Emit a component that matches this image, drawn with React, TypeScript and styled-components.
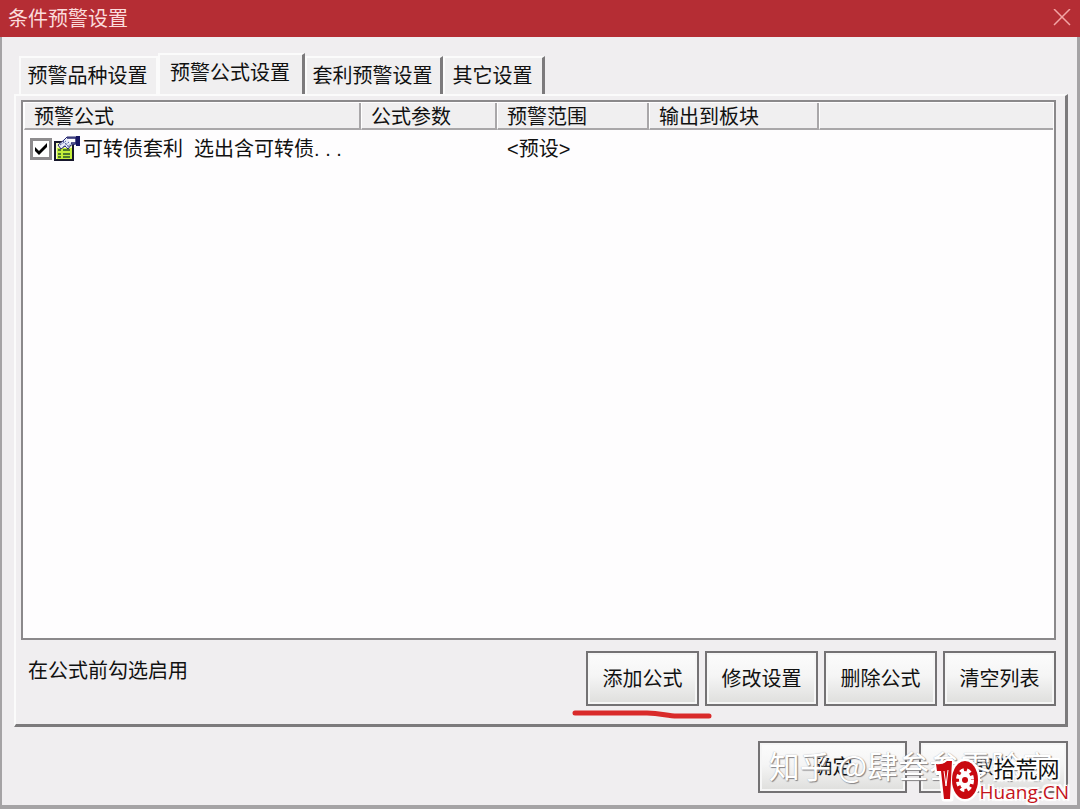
import React, { useState } from "react";
import styled, { createGlobalStyle } from "styled-components";

const GlobalStyle = createGlobalStyle`
  * { box-sizing: border-box; }
  body { margin: 0; background: #efedef; }
  body, button, input, table {
    font-family: "Liberation Sans", "Noto Sans CJK SC", sans-serif;
    font-size: 20px;
    line-height: 24px;
    color: #111;
  }
`;

const Window = styled.main`
  position: relative;
  display: flex;
  flex-direction: column;
  min-height: 100vh;
  background: #f0eef0;
  border: solid #a5a3a5;
  border-width: 0 3px 4px 2px;
`;

const TitleBar = styled.header`
  display: flex;
  align-items: center;
  justify-content: space-between;
  height: 37px;
  margin: 0 -3px 0 -2px;
  padding: 0 8px;
  background: #b52d34;
`;

const Title = styled.h1`
  margin: 0;
  font-size: 20px;
  font-weight: 400;
  color: #fbdcdc;
`;

const CloseButton = styled.button`
  display: flex;
  padding: 0;
  border: 0;
  background: none;
`;

const Body = styled.div`
  display: flex;
  flex: 1;
  flex-direction: column;
  padding: 16px 9px 12px 12px;
`;

const TabList = styled.div`
  display: flex;
  align-items: flex-end;
  height: 41px;
  padding-left: 5px;
`;

const Tab = styled.button<{ $width: number; $edge: boolean }>`
  width: ${(p) => p.$width}px;
  height: 38px;
  padding: 0 2px 0 0;
  border: solid #fbfbfb;
  border-width: 2px 2px 0 2px;
  border-right: ${(p) => (p.$edge ? "3px solid #7c7a7c" : "2px solid #fbfbfb")};
  border-bottom: 0;
  background: #f0eff0;
  color: #111;
  white-space: nowrap;

  &[aria-selected="true"] {
    height: 41px;
    padding-bottom: 4px;
  }
`;

const Panel = styled.section`
  display: flex;
  flex: 1;
  flex-direction: column;
  padding: 4px 9px 18px 5px;
  border: 2px solid #fbfbfb;
  border-right: 3px solid #7c7a7c;
  border-bottom: 3px solid #7c7a7c;
`;

const ListBox = styled.div`
  flex: 1;
  padding: 1px;
  border: 2px solid #8b898b;
  background: #fefdfe;
`;

const FormulaTable = styled.table`
  width: 100%;
  table-layout: fixed;
  border-collapse: separate;
  border-spacing: 0;
`;

const HeadCell = styled.th`
  height: 27px;
  padding: 4px 0 0 9px;
  border-right: 2px solid #a9a7a9;
  border-bottom: 2px solid #a9a7a9;
  border-left: 1px solid #fff;
  background: #f0eff0;
  font-weight: 400;
  text-align: left;
  line-height: 21px;
  white-space: nowrap;

  &:last-child { border-right: 0; }
`;

const Cell = styled.td`
  height: 38px;
  padding: 0 0 0 10px;
  white-space: nowrap;
`;

const FormulaLabel = styled.label`
  display: flex;
  align-items: center;
  margin-left: -4px;
  white-space: pre;
`;

const CheckFrame = styled.span`
  display: grid;
  flex: none;
  width: 22px;
  height: 22px;
  margin-right: 2px;

  > * { grid-area: 1 / 1; }
`;

const Check = styled.input`
  appearance: none;
  width: 22px;
  height: 22px;
  margin: 0;
  border: 3px solid #8e8c8e;
  background: #fff;

  &:not(:checked) + svg { visibility: hidden; }
`;

const CheckMark = styled.svg`
  pointer-events: none;
`;

const FormulaGlyph = styled.svg`
  flex: none;
  margin-right: 2px;
`;

const Footer = styled.div`
  display: flex;
  justify-content: space-between;
  padding: 11px 0 0 7px;
`;

const Hint = styled.p`
  margin: 0;
  padding-top: 8px;
`;

const Actions = styled.div`
  display: flex;
  gap: 6px;
`;

const PushButton = styled.button<{ $wide?: boolean }>`
  width: ${(p) => (p.$wide ? 149 : 113)}px;
  height: ${(p) => (p.$wide ? 52 : 55)}px;
  padding: 0;
  border: 2px solid #747274;
  background: linear-gradient(#fcfcfc, #f5f5f5 45%, #dededc);
  box-shadow: inset 0 0 0 2px #f6f6f6;
`;

const Marked = styled.div`
  position: relative;
  display: flex;
`;

const Underline = styled.svg`
  position: absolute;
  top: 56px;
  left: -15px;
`;

const DialogButtons = styled.div`
  display: flex;
  justify-content: flex-end;
  gap: 12px;
  padding-top: 14px;
`;

const AuthorMark = styled.div`
  position: absolute;
  right: 24px;
  bottom: 20px;
  color: #fff;
  font-family: "Noto Sans CJK SC", sans-serif;
  font-size: 31px;
  line-height: 40px;
  white-space: pre;
  text-shadow: 1px 1px 1px #858385, 0 0 1px #a5a3a5;
  pointer-events: none;
`;

const SiteMark = styled.div`
  position: absolute;
  right: 8px;
  bottom: 1px;
  display: flex;
  align-items: center;
  pointer-events: none;
`;

const SiteText = styled.div`
  display: flex;
  flex-direction: column;
  padding-bottom: 2px;
  text-shadow: 1px 0 #fff, -1px 0 #fff, 0 1px #fff, 0 -1px #fff, 2px 2px 1px #fff,
    -2px -2px 1px #fff, 2px -2px 1px #fff, -2px 2px 1px #fff;
`;

const SiteName = styled.span`
  padding-left: 14px;
  font-size: 22px;
  line-height: 24px;
`;

const SiteDomain = styled.span`
  color: #c4131b;
  font-family: "Open Sans", sans-serif;
  font-size: 19px;
  line-height: 20px;
`;

const tabs = [
  { name: "预警品种设置", width: 139, edge: false },
  { name: "预警公式设置", width: 147, edge: true },
  { name: "套利预警设置", width: 138, edge: true },
  { name: "其它设置", width: 102, edge: true },
];

const columns = [
  { name: "预警公式", width: 337 },
  { name: "公式参数", width: 136 },
  { name: "预警范围", width: 152 },
  { name: "输出到板块", width: 170 },
];

function FormulaIcon() {
  return (
    <FormulaGlyph width="27" height="26" viewBox="0 0 27 26" aria-hidden="true">
      <path d="M1 6H19V24H1Z" fill="#f2fbc0" stroke="#17172c" strokeWidth="2" />
      <path d="M3 12H18V23H3Z" fill="#c4ee3a" />
      <path d="M4 14H7M9 14H16M4 18H7M9 18H16M4 21H7M9 21H16" stroke="#29532a" strokeWidth="1.5" />
      <path d="M4 9L10 4L13 1H22V8L17 9L14 13L11 10L7 13Z" fill="#e9edfa" stroke="#25266f" strokeWidth="1" />
      <path d="M6 9L12 5M9 11L15 6M12 12L18 7M9 5L15 11" stroke="#5361a0" strokeWidth="1" strokeDasharray="2 1" />
      <path d="M13 2H22V7H17" fill="#fff" stroke="#25266f" strokeWidth="1.5" />
      <path d="M22 0H26V10H22Z" fill="#171763" />
    </FormulaGlyph>
  );
}

function SiteLogo() {
  return (
    <svg width="46" height="46" viewBox="0 0 46 46" aria-hidden="true">
      <g stroke="#fff" strokeWidth="5" strokeLinejoin="round" fill="#fff">
        <path d="M3 6Q9 7 14 3H17V41H10L7 13H3Z" />
        <ellipse cx="31" cy="22" rx="13" ry="19" />
      </g>
      <path d="M2 6Q9 7 13 3H18L16 41H10L7 13H3Z" fill="#c90910" />
      <path d="M10 13L12 28L14 12" fill="none" stroke="#fff" strokeWidth="1" />
      <ellipse cx="31" cy="22" rx="13" ry="19" fill="#c90910" />
      <ellipse cx="31" cy="22" rx="6" ry="9" fill="#fff" />
      <ellipse cx="31" cy="22" rx="7" ry="10" fill="none" stroke="#fff" strokeWidth="4" strokeDasharray="4 3" />
      <circle cx="31" cy="22" r="3" fill="#c90910" />
    </svg>
  );
}

export default function App() {
  const [selected, setSelected] = useState(1);
  const [enabled, setEnabled] = useState(true);

  return (
    <>
      <GlobalStyle />
      <Window>
        <TitleBar>
          <Title>条件预警设置</Title>
          <CloseButton aria-label="关闭">
            <svg width="20" height="20" viewBox="0 0 20 20" aria-hidden="true">
              <path d="M2 0L18 16M18 0L2 16" stroke="#f2a5a5" strokeWidth="1.5" />
            </svg>
          </CloseButton>
        </TitleBar>
        <Body>
          <TabList role="tablist">
            {tabs.map((tab, i) => (
              <Tab
                key={tab.name}
                role="tab"
                aria-selected={i === selected}
                onClick={() => setSelected(i)}
                $width={tab.width}
                $edge={tab.edge}
              >
                {tab.name}
              </Tab>
            ))}
          </TabList>
          <Panel role="tabpanel">
            <ListBox>
              <FormulaTable>
                <colgroup>
                  {columns.map((c) => (
                    <col key={c.name} width={c.width} />
                  ))}
                  <col />
                </colgroup>
                <thead>
                  <tr>
                    {columns.map((c) => (
                      <HeadCell key={c.name}>{c.name}</HeadCell>
                    ))}
                    <HeadCell />
                  </tr>
                </thead>
                <tbody>
                  <tr>
                    <Cell>
                      <FormulaLabel>
                        <CheckFrame>
                          <Check
                            type="checkbox"
                            checked={enabled}
                            onChange={(e) => setEnabled(e.target.checked)}
                          />
                          <CheckMark width="22" height="22" viewBox="0 0 22 22" aria-hidden="true">
                            <path d="M5 9L9 13L17 5V9L9 17L5 13Z" fill="#000" />
                          </CheckMark>
                        </CheckFrame>
                        <FormulaIcon />
                        {"可转债套利  选出含可转债. . ."}
                      </FormulaLabel>
                    </Cell>
                    <Cell />
                    <Cell>&lt;预设&gt;</Cell>
                    <Cell />
                    <Cell />
                  </tr>
                </tbody>
              </FormulaTable>
            </ListBox>
            <Footer>
              <Hint>在公式前勾选启用</Hint>
              <Actions>
                <Marked>
                  <PushButton>添加公式</PushButton>
                  <Underline width="142" height="14" viewBox="0 0 142 14" aria-hidden="true">
                    <path
                      d="M4 6H76C90 6 96 9 106 9H138"
                      fill="none"
                      stroke="#d92a2a"
                      strokeWidth="5"
                      strokeLinecap="round"
                    />
                  </Underline>
                </Marked>
                <PushButton>修改设置</PushButton>
                <PushButton>删除公式</PushButton>
                <PushButton>清空列表</PushButton>
              </Actions>
            </Footer>
          </Panel>
          <DialogButtons>
            <PushButton $wide>确定</PushButton>
            <PushButton $wide>取消</PushButton>
          </DialogButtons>
        </Body>
        <AuthorMark>知乎 @肆叁叁零除家</AuthorMark>
        <SiteMark>
          <SiteLogo />
          <SiteText>
            <SiteName>拾荒网</SiteName>
            <SiteDomain>Huang.CN</SiteDomain>
          </SiteText>
        </SiteMark>
      </Window>
    </>
  );
}
